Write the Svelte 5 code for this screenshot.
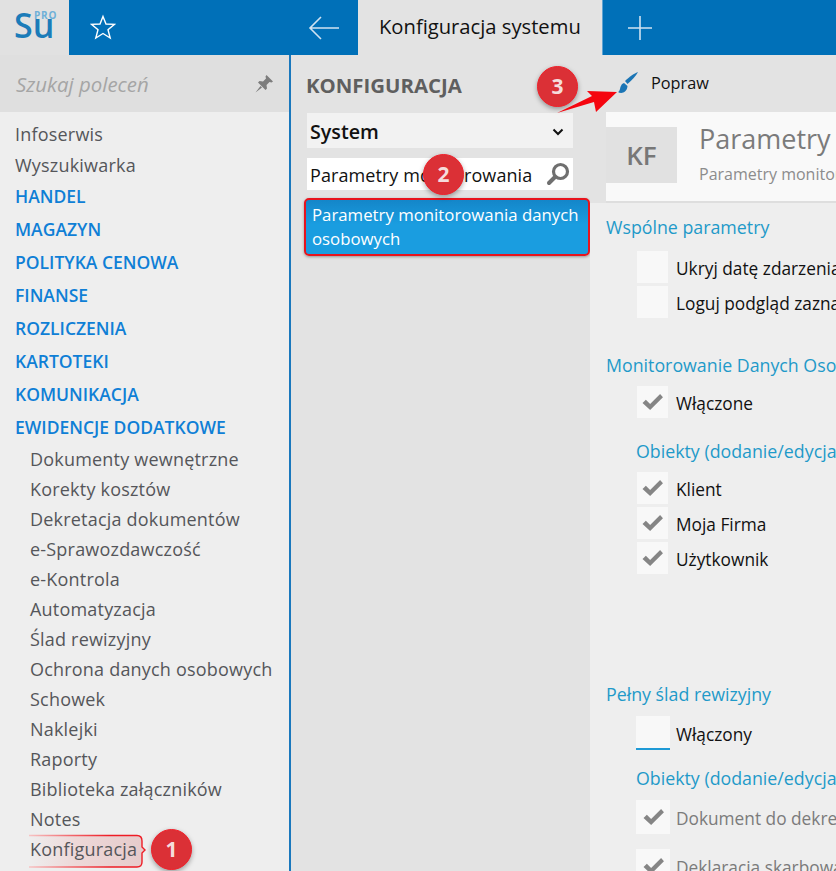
<script>
  const top = ['Infoserwis', 'Wyszukiwarka'];
  const groups = ['HANDEL', 'MAGAZYN', 'POLITYKA CENOWA', 'FINANSE', 'ROZLICZENIA', 'KARTOTEKI', 'KOMUNIKACJA', 'EWIDENCJE DODATKOWE'];
  const subs = ['Dokumenty wewnętrzne', 'Korekty kosztów', 'Dekretacja dokumentów', 'e-Sprawozdawczość', 'e-Kontrola', 'Automatyzacja', 'Ślad rewizyjny', 'Ochrona danych osobowych', 'Schowek', 'Naklejki', 'Raporty', 'Biblioteka załączników', 'Notes', 'Konfiguracja'];
</script>

{#snippet check()}
  <svg class="tick" viewBox="0 0 24 20"><path d="M1.5 10.5 L5 7 L9.5 11.5 L20 1 L23 4.5 L9.5 18 Z" fill="#858585"/></svg>
{/snippet}

{#snippet badge(n, cls)}
  <div class="badge {cls}">{n}</div>
{/snippet}

<div class="app">
  <header class="topbar">
    <div class="logo">
      <span class="su">Su</span><span class="pro">PRO</span>
    </div>
    <div class="star">
      <svg width="26" height="26" viewBox="0 0 26 26"><path d="M13 2.5 L16 10 L24.500 10.4 L18 15.8 L20.2 24 L13 19.5 L5.8 24 L8 15.8 L1.500 10.4 L10 10 Z" fill="none" stroke="#fff" stroke-width="1.4"/></svg>
    </div>
    <div class="back">
      <svg width="32" height="26" viewBox="0 0 32 26"><path d="M31 13 H2 M13 2 L2 13 L13 24" fill="none" stroke="#cfe2f1" stroke-width="1.6"/></svg>
    </div>
    <div class="tab">Konfiguracja systemu</div>
    <div class="plus">
      <svg width="24" height="24" viewBox="0 0 24 24"><path d="M12 0 V24 M0 12 H24" stroke="#cfe2f1" stroke-width="1.6"/></svg>
    </div>
  </header>

  <div class="main">
    <aside class="side">
      <div class="search">
        <span>Szukaj poleceń</span>
        <svg width="20" height="20" viewBox="0 0 20 20"><path d="M12.5 1 L19 7.5 L17.5 8.5 L15.5 8 L12.5 11 L13 14.5 L11.5 16 L4 8.5 L5.5 7 L9 7.5 L12 4.5 L11.5 2.5 Z M6.5 12 L1.500 18.5 L8 13.5 Z" fill="#7d7d7d"/></svg>
      </div>
      <nav class="menu">
        {#each top as t}<div class="plain">{t}</div>{/each}
        {#each groups as g}<div class="group">{g}</div>{/each}
        {#each subs as s}
          <div class="sub">
            {#if s === 'Konfiguracja'}
              <span class="callout">
                <svg width="118" height="33" viewBox="0 0 118 33">
                  <defs>
                    <linearGradient id="cf"><stop offset="0" stop-color="#eeeeee"/><stop offset=".4" stop-color="#edd8d8"/><stop offset="1" stop-color="#e6cbcb"/></linearGradient>
                    <linearGradient id="cs"><stop offset="0" stop-color="#f7c4c4"/><stop offset=".35" stop-color="#f26a6f"/><stop offset=".7" stop-color="#ee1c25"/></linearGradient>
                  </defs>
                  <path d="M0 .5 H108 Q113 .5 113 6 V12 L116 15 L113 18 V27 Q113 32 108 32 H0" fill="url(#cf)" stroke="url(#cs)" stroke-width="1.4"/>
                </svg>
                {s}
              </span>
            {:else}{s}{/if}
          </div>
        {/each}
      </nav>
    </aside>

    <section class="mid">
      <h2>KONFIGURACJA</h2>
      <div class="select"><b>System</b>
        <svg width="12" height="8" viewBox="0 0 12 8"><path d="M1.500 1.500 L6 6 L10.500 1.500" fill="none" stroke="#111" stroke-width="2"/></svg>
      </div>
      <div class="filter"><span>Parametry monitorowania</span>
        <svg width="24" height="24" viewBox="0 0 24 24"><circle cx="14.500" cy="9.500" r="7" fill="none" stroke="#6f6f6f" stroke-width="3.200"/><path d="M9 15 L3 21" stroke="#6f6f6f" stroke-width="4" stroke-linecap="round"/></svg>
      </div>
      <div class="result">Parametry monitorowania danych osobowych</div>
    </section>

    <section class="content">
      <div class="toolbar">
        <svg width="22" height="24" viewBox="0 0 22 24"><path d="M21 1 C18 2 13 5 8 10 L10.500 13 C15 9 19 5 21 1 Z" fill="#1b75b5"/><path d="M7 12 C4 13 3.500 16 3 18 C2.500 20 1.500 21 1 21 C4 23 10 22 10.500 15 Z" fill="#1b75b5"/></svg>
        <span>Popraw</span>
      </div>
      <div class="headwrap">
        <div class="head">
          <div class="kf">KF</div>
          <div class="titles">
            <div class="title">Parametry monitorowania danych osobowych</div>
            <div class="subtitle">Parametry monitorowania danych osobowych</div>
          </div>
        </div>
      </div>

      <div class="sect first">Wspólne parametry</div>
      <div class="row r1"><span class="box"></span><span class="lbl">Ukryj datę zdarzenia</span></div>
      <div class="row r2"><span class="box"></span><span class="lbl">Loguj podgląd zaznaczonych</span></div>

      <div class="sect second">Monitorowanie Danych Osobowych</div>
      <div class="row"><span class="box">{@render check()}</span><span class="lbl">Włączone</span></div>

      <div class="sect inner o1">Obiekty (dodanie/edycja)</div>
      <div class="row"><span class="box">{@render check()}</span><span class="lbl">Klient</span></div>
      <div class="row r2"><span class="box">{@render check()}</span><span class="lbl">Moja Firma</span></div>
      <div class="row r2"><span class="box">{@render check()}</span><span class="lbl">Użytkownik</span></div>

      <div class="sect third">Pełny ślad rewizyjny</div>
      <div class="row r5"><span class="box wide focused"></span><span class="lbl">Włączony</span></div>

      <div class="sect inner o2">Obiekty (dodanie/edycja)</div>
      <div class="row grey r5"><span class="box wide">{@render check()}</span><span class="lbl">Dokument do dekretacji</span></div>
      <div class="row grey r4"><span class="box wide">{@render check()}</span><span class="lbl">Deklaracja skarbowa</span></div>
    </section>
  </div>

  {@render badge(1, 'b1')}
  {@render badge(2, 'b2')}
  {@render badge(3, 'b3')}
  <svg class="arrow" width="64" height="28" viewBox="0 0 64 28"><path d="M2 25 L37 8 L32 3 L62 4 L41 24 L39 14 Z" fill="#f5050f"/></svg>
</div>

<style>
  :global(body) {
    margin: 0;
    font-family: "Open Sans", "Noto Sans", sans-serif;
    overflow: hidden;
  }

  .app {
    position: relative;
    width: 836px;
    height: 871px;
    overflow: hidden;
    background: #e3e3e3;
    color: #111;
  }

  .topbar {
    display: flex;
    height: 55px;
    background: #0070b8;
  }
  .logo {
    position: relative;
    width: 69px;
    background: #e1e1e1;
  }
  .su {
    position: absolute;
    left: 14px;
    top: 2px;
    font-size: 34px;
    line-height: 46px;
    font-weight: 600;
    color: #1b7cb9;
  }
  .pro {
    position: absolute;
    left: 34px;
    top: 10px;
    font-size: 10px;
    line-height: 10px;
    font-weight: 700;
    letter-spacing: .8px;
    color: #6fb0d8;
  }
  .star {
    display: flex;
    align-items: center;
    width: 221px;
    padding-left: 21px;
    box-sizing: border-box;
  }
  .star svg { margin-top: -1px; }
  .back {
    display: flex;
    align-items: center;
    width: 68px;
    padding-left: 18px;
    box-sizing: border-box;
  }
  .tab {
    width: 245px;
    background: #e3e3e3;
    border-right: 1px solid #5ea3d2;
    box-sizing: border-box;
    padding-left: 21px;
    font-size: 20.2px;
    line-height: 52px;
    white-space: nowrap;
    color: #111;
  }
  .plus {
    display: flex;
    align-items: center;
    padding-left: 25px;
  }

  .main {
    display: flex;
    height: 816px;
  }

  .side {
    width: 291px;
    flex: none;
    box-sizing: border-box;
    background: #eeeeee;
    border-right: 2px solid #1a78bd;
  }
  .search {
    display: flex;
    align-items: center;
    justify-content: space-between;
    height: 57px;
    box-sizing: border-box;
    padding: 0 15px 0 16px;
    background: #dfdfdf;
    font-size: 20.4px;
    font-style: italic;
    color: #a5a5a5;
  }
  .menu {
    padding: 7px 0 0 15px;
    font-size: 18px;
    letter-spacing: .2px;
    color: #55565a;
  }
  .plain {
    height: 31px;
    line-height: 31px;
  }
  .group {
    height: 33px;
    line-height: 33px;
    font-size: 17.5px;
    letter-spacing: 0;
    font-weight: 600;
    color: #0f7fd6;
  }
  .plain + .group { margin-top: -1px; }
  .sub {
    height: 30px;
    line-height: 30px;
    padding-left: 15px;
  }
  .callout {
    display: inline-block;
    position: relative;
    isolation: isolate;
  }
  .callout svg {
    position: absolute;
    left: -1px;
    top: 1px;
    z-index: -1;
    overflow: visible;
  }

  .mid {
    width: 299px;
    flex: none;
    box-sizing: border-box;
    padding: 16px 17px 0 16px;
    background: #e3e3e3;
  }
  h2 {
    margin: 0 0 14px -1px;
    font-size: 20.4px;
    line-height: 28px;
    font-weight: 700;
    white-space: nowrap;
    color: #5f5f5f;
  }
  .select {
    display: flex;
    align-items: center;
    justify-content: space-between;
    height: 35px;
    padding: 2px 9px 0 3px;
    box-sizing: border-box;
    background: #f2f2f2;
    font-size: 19.700px;
  }
  .select b { font-weight: 600; }
  .filter {
    display: flex;
    align-items: center;
    justify-content: space-between;
    height: 32px;
    margin-top: 10px;
    padding: 0 3px;
    background: #fff;
    font-size: 18px;
    letter-spacing: .08px;
    white-space: nowrap;
  }
  .filter span { padding-top: 2px; }
  .result {
    margin: 8px -17px 0 -3px;
    padding: 3px 5px 3px 6px;
    border: 2px solid #e8141d;
    border-radius: 5px;
    background: linear-gradient(180deg, #1486c9, #1a9de0 45%);
    box-shadow: 0 1px 3px rgba(0, 0, 0, .35);
    color: #fff;
    font-size: 16.800px;
    line-height: 24px;
  }

  .content {
    flex: 1;
    min-width: 0;
    overflow: hidden;
    background: #eeeeee;
    white-space: nowrap;
  }
  .toolbar {
    display: flex;
    align-items: center;
    height: 57px;
    box-sizing: border-box;
    padding-left: 27px;
    background: #e3e3e3;
    font-size: 16.300px;
  }
  .toolbar svg { margin-top: -2px; }
  .toolbar span { margin: -1px 0 0 12px; }
  .headwrap {
    padding-left: 16px;
    background: #e3e3e3;
  }
  .head {
    display: flex;
    height: 91px;
    box-sizing: border-box;
    padding-top: 15px;
    background: #f9f9f9;
    border-bottom: 2px solid #dedede;
  }
  .kf {
    width: 71px;
    height: 56px;
    flex: none;
    background: #e1e1e1;
    color: #777;
    font-size: 26px;
    font-weight: 600;
    line-height: 56px;
    text-align: center;
  }
  .titles { margin-left: 22px; }
  .title {
    font-size: 27px;
    line-height: 34px;
    color: #7b7b7b;
    margin-top: -5px;
  }
  .subtitle {
    font-size: 16px;
    line-height: 22px;
    margin-top: 7px;
    color: #8c8c8c;
  }
  .sect {
    margin-left: 16px;
    font-size: 17.800px;
    line-height: 24px;
    color: #1f9ac9;
  }
  .sect.inner { margin-left: 46px; }
  .sect.first { margin-top: 12px; }
  .sect.second { margin-top: 35px; }
  .sect.third { margin-top: 108px; }
  .sect.o1 { margin-top: 21px; }
  .sect.o2 { margin-top: 16px; }

  .row {
    display: flex;
    align-items: center;
    margin: 9px 0 0 47px;
    font-size: 17.300px;
    color: #111;
  }
  .row.r1 { margin-top: 12px; }
  .row.r2 { margin-top: 3px; }
  .row.r4 { margin-top: 15px; }
  .row.r5 { margin-top: 10px; }
  .row.grey { color: #7b7b7b; }
  .lbl { padding-top: 3px; }
  .box {
    display: flex;
    align-items: center;
    justify-content: center;
    width: 31px;
    height: 32px;
    margin-right: 8px;
    flex: none;
    background: #f8f8f8;
  }
  .box.wide {
    width: 34px;
    height: 34px;
    margin-left: -1px;
    margin-right: 6px;
  }
  .box.focused {
    border-bottom: 2px solid #1f9ad6;
    box-sizing: border-box;
  }
  .tick { width: 23px; height: 19px; }

  .badge {
    position: absolute;
    width: 41px;
    height: 41px;
    box-sizing: border-box;
    border: 1px solid #f2202a;
    border-radius: 50%;
    background: #db3036;
    box-shadow: 0 2px 5px rgba(0, 0, 0, .35);
    color: #f5dcdc;
    font-size: 21px;
    font-weight: 700;
    line-height: 39px;
    text-align: center;
  }
  .b1 { left: 151px; top: 829px; }
  .b2 { left: 423px; top: 154px; }
  .b3 { left: 537px; top: 66px; }
  .arrow {
    position: absolute;
    left: 555px;
    top: 88px;
  }
</style>
